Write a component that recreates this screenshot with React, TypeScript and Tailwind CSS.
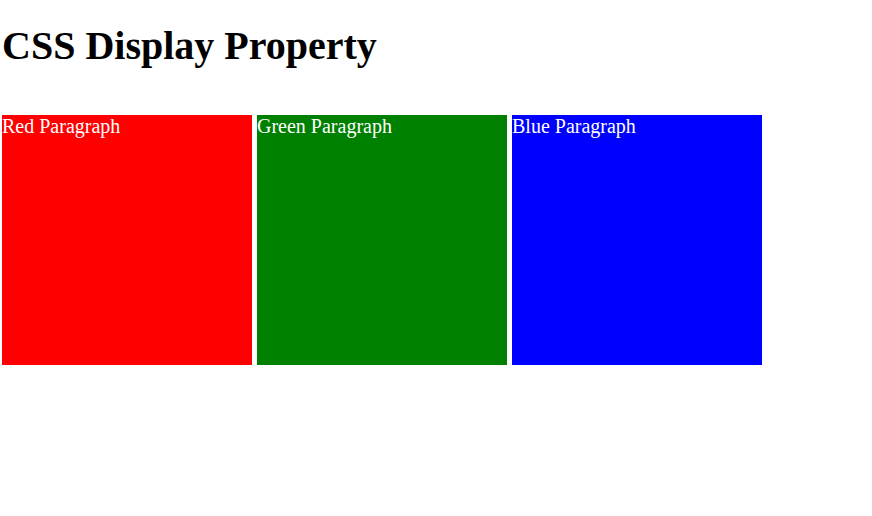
export default function App() {
  const boxes = [
    { label: "Red Paragraph", color: "bg-[#ff0000]" },
    { label: "Green Paragraph", color: "bg-[#008000]" },
    { label: "Blue Paragraph", color: "bg-[#0000ff]" },
  ];

  return (
    <div className="min-h-screen bg-white px-[2px] font-['Liberation_Serif',serif] text-black">
      <h1 className="pt-[24px] text-[40px] font-bold leading-[44px]">CSS Display Property</h1>
      <div className="mt-[47px] flex gap-[5px]">
        {boxes.map((box) => (
          <p
            key={box.label}
            className={`h-[250px] w-[250px] text-[20px] leading-[23px] text-white ${box.color}`}
          >
            {box.label}
          </p>
        ))}
      </div>
    </div>
  );
}
